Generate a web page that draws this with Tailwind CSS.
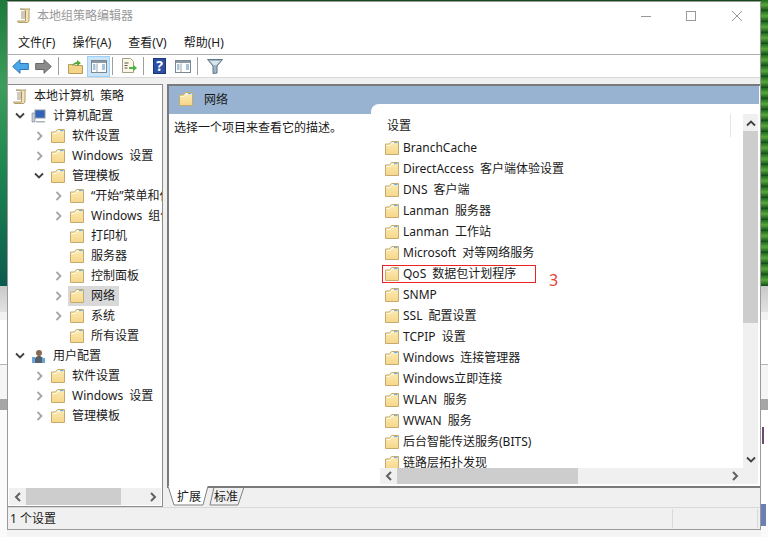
<!DOCTYPE html>
<html lang="zh-CN">

<head>
	<meta charset="UTF-8">
	<title>本地组策略编辑器</title>
	<script src="https://cdn.jsdelivr.net/npm/@tailwindcss/browser@4"></script>
</head>

<body class="m-0 bg-white">
	<svg class="absolute w-0 h-0">
		<defs>
			<linearGradient id="fg" x1="0" y1="0" x2="0" y2="1">
				<stop offset="0" stop-color="#fcecb4" />
				<stop offset="1" stop-color="#f6d68a" />
			</linearGradient>
		</defs>
		<symbol id="folder" viewBox="0 0 14 14">
			<path d="M.5 13.500V3h4l2-2.500h7v13z" fill="url(#fg)" stroke="#c6ab6e" />
			<path d="M1.500 4.500h3.500l2-2.500h5.500" fill="none" stroke="#fffbe9" />
			<rect x="9" y="1" width="3.500" height="1.200" fill="#6cb2e2" />
		</symbol>
		<symbol id="open" viewBox="0 0 8 10">
			<path d="M1.500 1l4 4-4 4" fill="none" stroke="#a6a6a6" stroke-width="1.800" />
		</symbol>
		<symbol id="down" viewBox="0 0 10 8">
			<path d="M1 1.500l4 4 4-4" fill="none" stroke="#404040" stroke-width="1.800" />
		</symbol>
		<symbol id="bl" viewBox="0 0 8 10">
			<path d="M6 1L2 5l4 4" fill="none" stroke="#606060" stroke-width="2" />
		</symbol>
		<symbol id="br" viewBox="0 0 8 10">
			<path d="M2 1l4 4-4 4" fill="none" stroke="#606060" stroke-width="2" />
		</symbol>
		<symbol id="scroll" viewBox="0 0 14 15">
			<path d="M3 1h10c-1 1-1 2-1 3v8c0 1.500-1 2.500-2 2.500H2c-1 0-1.500-.5-1.500-1.500h8V3C9 2 9 2 3 1z" fill="#f3e3b5" stroke="#a08850" stroke-width=".8" />
			<path d="M4 4h5M4 6h5M4 8h5M4 10h4" stroke="#8a7a55" stroke-width=".8" />
		</symbol>
		<symbol id="panel" viewBox="0 0 16 13">
			<rect x=".5" y=".5" width="15" height="12" fill="#fff" stroke="#7b8792" />
			<rect x="1" y="1" width="14" height="2" fill="#8c98a3" />
			<path d="M6 3.500v9" stroke="#9aa5ae" />
			<path d="M2 5h2.500M2 7h2.500M2 9h2.500M11 5h3M11 7h3M11 9h3" stroke="#4f87b5" />
		</symbol>
	</svg>

	<div class="w-[768px] h-[537px] flex overflow-hidden font-['Noto_Sans','Noto_Sans_CJK_SC',sans-serif] text-[12px] leading-5 text-[#1a1a1a] [word-spacing:3px]">
		<!-- desktop left of the window -->
		<div class="w-[7px] flex flex-col shrink-0">
			<div class="h-[286px] bg-[linear-gradient(180deg,#1d7a3a_0%,#3d9d5b_30%,#1d8550_60%,#0b5a4e_100%)]"></div>
			<div class="h-[26px] bg-[linear-gradient(180deg,#c9c9c9,#e2e2e2)]"></div>
			<div class="h-[8px] bg-[#f2f2f2]"></div>
			<div class="h-[45px] bg-white border-b border-[#b5b5b5]"></div>
			<div class="h-[34px] bg-[#f5f5f5]"></div>
			<div class="h-[11px] bg-[#a6a6a6]"></div>
			<div class="flex-1 bg-[#fafafa]"></div>
		</div>

		<!-- window -->
		<div class="w-[754px] shrink-0 flex flex-col">
			<div class="h-px shrink-0 bg-[#12491c]"></div>
			<div class="h-[529px] shrink-0 bg-white border border-[#9a9a9a] flex flex-col">
				<div class="h-[27px] flex items-center pl-[9px] shrink-0">
					<svg class="w-[14px] h-[15px]"><use href="#scroll" /></svg>
					<span class="ml-[6px] text-[#999999]">本地组策略编辑器</span>
					<div class="ml-auto flex items-center">
						<svg class="w-[10px] h-[10px]" viewBox="0 0 10 10"><path d="M0 5.500h10" stroke="#999" /></svg>
						<svg class="w-[10px] h-[10px] ml-[35px]" viewBox="0 0 10 10"><rect x=".5" y=".5" width="9" height="9" fill="none" stroke="#999" /></svg>
						<svg class="w-[10px] h-[10px] ml-[36px] mr-[18px]" viewBox="0 0 10 10"><path d="M0 0l10 10M10 0L0 10" stroke="#999" /></svg>
					</div>
				</div>
				<div class="h-[26px] pt-[3px] flex items-center pl-[10px] gap-[17px] border-b border-[#b0b0b0] shrink-0">
					<span>文件(F)</span><span>操作(A)</span><span>查看(V)</span><span>帮助(H)</span>
				</div>

				<div class="h-[22px] flex items-center pl-[4px] shrink-0">
					<svg class="w-[17px] h-[15px] shrink-0" viewBox="0 0 17 15"><path d="M.7 7.500L8 .7v3.800h8.300v6H8v3.800z" fill="#4aa8ea" stroke="#2a73b8" /></svg>
					<svg class="w-[17px] h-[15px] shrink-0 ml-[6px]" viewBox="0 0 17 15"><path d="M16.300 7.500L9 .7v3.800H.7v6H9v3.800z" fill="#8a8a8a" stroke="#666" /></svg>
					<div class="w-px h-[18px] bg-[#a0a0a0] ml-[6px]"></div>
					<svg class="w-[15px] h-[15px] ml-[9px]" viewBox="0 0 15 15"><path d="M.5 14.500v-9h5l1 1h8v8z" fill="#f4d488" stroke="#b99a5b" /><path d="M4 7c1-3 3-4 5-4V1l4 3-4 3V5C7 5 6 6 4 7z" fill="#55a63f" /></svg>
					<div class="w-[23px] h-[21px] ml-[4px] bg-[#cce4f7] border border-[#99d1ff] flex items-center justify-center">
						<svg class="w-[16px] h-[13px]"><use href="#panel" /></svg>
					</div>
					<div class="w-px h-[18px] bg-[#a0a0a0] ml-[2px]"></div>
					<svg class="w-[16px] h-[16px] ml-[8px]" viewBox="0 0 16 16"><path d="M1.500.5h8l3 3v11h-11z" fill="#fbf6e6" stroke="#a69d85" /><path d="M3.500 5h4M3.500 7.500h3M3.500 10h3" stroke="#555" /><path d="M8 9h4V6.500L16 10l-4 3.500V11H8z" fill="#55b04a" /></svg>
					<div class="w-px h-[18px] bg-[#a0a0a0] ml-[6px]"></div>
					<div class="w-[13px] h-[16px] ml-[9px] bg-[#2c4fa6] border border-[#1d3577] text-white font-bold text-[14px] leading-[14px] text-center">?</div>
					<svg class="w-[16px] h-[13px] ml-[9px]"><use href="#panel" /></svg>
					<div class="w-px h-[18px] bg-[#a0a0a0] ml-[6px]"></div>
					<svg class="w-[16px] h-[15px] ml-[9px]" viewBox="0 0 16 15"><path d="M.5.5h15L10 7v7l-4 0.500V7z" fill="#9fb6c6" stroke="#5d7688" /><path d="M3 2h10L9.500 6h-3z" fill="#dbe6ec" /></svg>
				</div>
				<div class="h-[7px] bg-[#f0f0f0] border-t border-[#d9d9d9] shrink-0"></div>

				<div class="flex-1 min-h-0 flex bg-[#f0f0f0]">
					<!-- tree -->
					<div class="w-[155px] shrink-0 flex flex-col bg-white border-t border-r border-b border-[#8c8c8c] overflow-hidden">
						<div class="flex-1 min-h-0 overflow-hidden whitespace-nowrap pt-px">
							<div class="h-5 flex items-center pl-[5px]"><svg class="w-[14px] h-[15px] shrink-0"><use href="#scroll" /></svg><span class="ml-[7px]">本地计算机 策略</span></div>
							<div class="h-5 flex items-center pl-[7px]">
								<svg class="w-[10px] h-[8px] shrink-0"><use href="#down" /></svg>
								<svg class="w-[15px] h-[14px] shrink-0 ml-[6px]" viewBox="0 0 15 14"><rect x="4" y="1" width="10" height="8" fill="#2f62b8" stroke="#8d99a8" /><path d="M1 4h3v9H1z" fill="#c5ccd4" stroke="#7b8794" stroke-width=".6" /><path d="M5 12h9v1.500H5z" fill="#aab3bd" /></svg>
								<span class="ml-[7px]">计算机配置</span>
							</div>
							<div class="h-5 flex items-center pl-[28px]"><svg class="w-[8px] h-[10px] shrink-0"><use href="#open" /></svg><svg class="w-[14px] h-[14px] shrink-0 ml-[7px]"><use href="#folder" /></svg><span class="ml-[7px]">软件设置</span></div>
							<div class="h-5 flex items-center pl-[28px]"><svg class="w-[8px] h-[10px] shrink-0"><use href="#open" /></svg><svg class="w-[14px] h-[14px] shrink-0 ml-[7px]"><use href="#folder" /></svg><span class="ml-[7px]">Windows 设置</span></div>
							<div class="h-5 flex items-center pl-[26px]"><svg class="w-[10px] h-[8px] shrink-0"><use href="#down" /></svg><svg class="w-[14px] h-[14px] shrink-0 ml-[7px]"><use href="#folder" /></svg><span class="ml-[7px]">管理模板</span></div>
							<div class="h-5 flex items-center pl-[47px]"><svg class="w-[8px] h-[10px] shrink-0"><use href="#open" /></svg><svg class="w-[14px] h-[14px] shrink-0 ml-[7px]"><use href="#folder" /></svg><span class="ml-[7px]">“开始”菜单和任务栏</span></div>
							<div class="h-5 flex items-center pl-[47px]"><svg class="w-[8px] h-[10px] shrink-0"><use href="#open" /></svg><svg class="w-[14px] h-[14px] shrink-0 ml-[7px]"><use href="#folder" /></svg><span class="ml-[7px]">Windows 组件</span></div>
							<div class="h-5 flex items-center pl-[62px]"><svg class="w-[14px] h-[14px] shrink-0"><use href="#folder" /></svg><span class="ml-[7px]">打印机</span></div>
							<div class="h-5 flex items-center pl-[62px]"><svg class="w-[14px] h-[14px] shrink-0"><use href="#folder" /></svg><span class="ml-[7px]">服务器</span></div>
							<div class="h-5 flex items-center pl-[47px]"><svg class="w-[8px] h-[10px] shrink-0"><use href="#open" /></svg><svg class="w-[14px] h-[14px] shrink-0 ml-[7px]"><use href="#folder" /></svg><span class="ml-[7px]">控制面板</span></div>
							<div class="h-5 flex items-center pl-[47px]"><svg class="w-[8px] h-[10px] shrink-0"><use href="#open" /></svg><div class="w-[51px] h-5 ml-[5px] pl-[2px] bg-[#d9d9d9] flex items-center"><svg class="w-[14px] h-[14px] shrink-0"><use href="#folder" /></svg><span class="ml-[7px]">网络</span></div></div>
							<div class="h-5 flex items-center pl-[47px]"><svg class="w-[8px] h-[10px] shrink-0"><use href="#open" /></svg><svg class="w-[14px] h-[14px] shrink-0 ml-[7px]"><use href="#folder" /></svg><span class="ml-[7px]">系统</span></div>
							<div class="h-5 flex items-center pl-[62px]"><svg class="w-[14px] h-[14px] shrink-0"><use href="#folder" /></svg><span class="ml-[7px]">所有设置</span></div>
							<div class="h-5 flex items-center pl-[7px]">
								<svg class="w-[10px] h-[8px] shrink-0"><use href="#down" /></svg>
								<svg class="w-[15px] h-[15px] shrink-0 ml-[6px]" viewBox="0 0 15 15"><circle cx="8" cy="4" r="3" fill="#8a6a4f" /><path d="M3 14c0-5 2-7 5-7s5 2 5 7z" fill="#56606c" /><path d="M1 8h3v6H1zM11 9h3v5h-3z" fill="#6aa5d8" /></svg>
								<span class="ml-[7px]">用户配置</span>
							</div>
							<div class="h-5 flex items-center pl-[28px]"><svg class="w-[8px] h-[10px] shrink-0"><use href="#open" /></svg><svg class="w-[14px] h-[14px] shrink-0 ml-[7px]"><use href="#folder" /></svg><span class="ml-[7px]">软件设置</span></div>
							<div class="h-5 flex items-center pl-[28px]"><svg class="w-[8px] h-[10px] shrink-0"><use href="#open" /></svg><svg class="w-[14px] h-[14px] shrink-0 ml-[7px]"><use href="#folder" /></svg><span class="ml-[7px]">Windows 设置</span></div>
							<div class="h-5 flex items-center pl-[28px]"><svg class="w-[8px] h-[10px] shrink-0"><use href="#open" /></svg><svg class="w-[14px] h-[14px] shrink-0 ml-[7px]"><use href="#folder" /></svg><span class="ml-[7px]">管理模板</span></div>
						</div>
						<div class="h-[17px] mx-px mb-px flex bg-[#f0f0f0] shrink-0">
							<div class="w-[17px] flex items-center justify-center"><svg class="w-[8px] h-[10px]"><use href="#bl" /></svg></div>
							<div class="w-[95px] bg-[#cdcdcd]"></div>
							<div class="ml-auto w-[17px] flex items-center justify-center"><svg class="w-[8px] h-[10px]"><use href="#br" /></svg></div>
						</div>
					</div>

					<!-- details -->
					<div class="w-[4px] shrink-0"></div>
					<div class="flex-1 min-w-0 flex flex-col">
						<div class="flex-1 min-h-0 border-t-2 border-l-2 border-[#7a7a7a] bg-white pr-px flex flex-col">
							<div class="h-[28px] bg-[#98b3d1] shrink-0 flex items-start pl-[10px] pt-[5px]">
								<svg class="w-[14px] h-[14px] mt-[1px]"><use href="#folder" /></svg>
								<span class="ml-[11px] leading-[18px]">网络</span>
							</div>
							<div class="flex-1 min-h-0 flex">
								<div class="w-[202px] shrink-0 pl-[5px] pt-[4px]">选择一个项目来查看它的描述。</div>
								<div class="flex-1 min-w-0 flex flex-col -mt-[10px] pt-[10px] bg-white rounded-tl-[8px] pl-[9px] pr-[1px] pb-[3px] whitespace-nowrap">
									<div class="flex-1 min-h-0 flex">
										<div class="flex-1 min-w-0 flex flex-col">
											<div class="h-[23px] shrink-0 flex items-center pl-[7px] relative">
												<span>设置</span>
												<div class="absolute right-[12px] top-0 bottom-0 w-px bg-[#e5e5e5]"></div>
											</div>
											<div class="flex-1 min-h-0 overflow-hidden">
												<div class="h-[21px] flex items-center pl-[5px]"><svg class="w-[14px] h-[14px]"><use href="#folder" /></svg><span class="ml-[4px]">BranchCache</span></div>
												<div class="h-[21px] flex items-center pl-[5px]"><svg class="w-[14px] h-[14px]"><use href="#folder" /></svg><span class="ml-[4px]">DirectAccess 客户端体验设置</span></div>
												<div class="h-[21px] flex items-center pl-[5px]"><svg class="w-[14px] h-[14px]"><use href="#folder" /></svg><span class="ml-[4px]">DNS 客户端</span></div>
												<div class="h-[21px] flex items-center pl-[5px]"><svg class="w-[14px] h-[14px]"><use href="#folder" /></svg><span class="ml-[4px]">Lanman 服务器</span></div>
												<div class="h-[21px] flex items-center pl-[5px]"><svg class="w-[14px] h-[14px]"><use href="#folder" /></svg><span class="ml-[4px]">Lanman 工作站</span></div>
												<div class="h-[21px] flex items-center pl-[5px]"><svg class="w-[14px] h-[14px]"><use href="#folder" /></svg><span class="ml-[4px]">Microsoft 对等网络服务</span></div>
												<div class="h-[21px] flex items-center pl-[5px] relative">
													<svg class="w-[14px] h-[14px]"><use href="#folder" /></svg><span class="ml-[4px]">QoS 数据包计划程序</span>
													<div class="absolute left-[2px] top-[2px] w-[154px] h-[18px] border border-[#ee2222]"></div>
													<span class="absolute left-[169px] top-[7px] text-[16px] leading-5 text-[#e8403a]">3</span>
												</div>
												<div class="h-[21px] flex items-center pl-[5px]"><svg class="w-[14px] h-[14px]"><use href="#folder" /></svg><span class="ml-[4px]">SNMP</span></div>
												<div class="h-[21px] flex items-center pl-[5px]"><svg class="w-[14px] h-[14px]"><use href="#folder" /></svg><span class="ml-[4px]">SSL 配置设置</span></div>
												<div class="h-[21px] flex items-center pl-[5px]"><svg class="w-[14px] h-[14px]"><use href="#folder" /></svg><span class="ml-[4px]">TCPIP 设置</span></div>
												<div class="h-[21px] flex items-center pl-[5px]"><svg class="w-[14px] h-[14px]"><use href="#folder" /></svg><span class="ml-[4px]">Windows 连接管理器</span></div>
												<div class="h-[21px] flex items-center pl-[5px]"><svg class="w-[14px] h-[14px]"><use href="#folder" /></svg><span class="ml-[4px]">Windows立即连接</span></div>
												<div class="h-[21px] flex items-center pl-[5px]"><svg class="w-[14px] h-[14px]"><use href="#folder" /></svg><span class="ml-[4px]">WLAN 服务</span></div>
												<div class="h-[21px] flex items-center pl-[5px]"><svg class="w-[14px] h-[14px]"><use href="#folder" /></svg><span class="ml-[4px]">WWAN 服务</span></div>
												<div class="h-[21px] flex items-center pl-[5px]"><svg class="w-[14px] h-[14px]"><use href="#folder" /></svg><span class="ml-[4px]">后台智能传送服务(BITS)</span></div>
												<div class="h-[21px] flex items-center pl-[5px]"><svg class="w-[14px] h-[14px]"><use href="#folder" /></svg><span class="ml-[4px]">链路层拓扑发现</span></div>
											</div>
										</div>
										<div class="w-[15px] shrink-0 bg-[#f0f0f0] flex flex-col">
											<div class="h-[17px] flex items-center justify-center"><svg class="w-[10px] h-[8px] rotate-180"><use href="#down" /></svg></div>
											<div class="h-[192px] bg-[#cdcdcd]"></div>
											<div class="mt-auto h-[17px] flex items-center justify-center"><svg class="w-[10px] h-[8px]"><use href="#down" /></svg></div>
										</div>
									</div>
									<div class="h-[16px] shrink-0 flex bg-[#f0f0f0]">
										<div class="w-[17px] flex items-center justify-center"><svg class="w-[8px] h-[10px]"><use href="#bl" /></svg></div>
										<div class="w-[181px] bg-[#cdcdcd]"></div>
										<div class="ml-auto w-[17px] mr-[15px] flex items-center justify-center"><svg class="w-[8px] h-[10px]"><use href="#br" /></svg></div>
									</div>
								</div>
							</div>
						</div>
						<!-- tabs -->
						<div class="h-[21px] shrink-0 border-t-2 border-[#7a7a7a] flex bg-[#f0f0f0] -mt-px">
							<svg class="w-[42px] h-[20px] -mt-[2px] relative shrink-0" viewBox="0 0 42 20"><path d="M1 0l6 19h29l5-19z" fill="#fff" stroke="#808080" /><path d="M1.500 0h39" stroke="#fff" stroke-width="2" /></svg>
							<span class="-ml-[32px] w-[32px] relative leading-[18px]">扩展</span>
							<svg class="w-[36px] h-[20px] -mt-[2px] relative shrink-0" viewBox="0 0 36 20"><path d="M1 19h28l6-18" fill="none" stroke="#808080" /><path d="M1 19L5 1" stroke="#808080" /></svg>
							<span class="-ml-[31px] relative leading-[18px]">标准</span>
						</div>
					</div>
				</div>

				<div class="h-[22px] shrink-0 bg-[#f0f0f0] border-t border-[#d9d9d9] flex items-center pl-[2px]">
					<span class="flex-1 leading-5 [word-spacing:0]">1 个设置</span>
					<div class="w-[86px] h-[19px] border-l border-r border-[#d9d9d9] mr-[2px]"></div>
				</div>
			</div>
			<div class="flex-1 bg-[#f4f4f4]"></div>
		</div>

		<!-- desktop right of the window -->
		<div class="flex-1 flex flex-col">
			<div class="h-[286px] bg-[repeating-linear-gradient(180deg,#1f6b1e_0px,#57a83a_5px,#0f4a18_11px)]"></div>
			<div class="h-[26px] bg-[linear-gradient(180deg,#c9c9c9,#e2e2e2)]"></div>
			<div class="h-[8px] bg-[#f2f2f2]"></div>
			<div class="h-[45px] bg-white border-b border-[#b5b5b5]"></div>
			<div class="h-[34px] bg-[#f5f5f5]"></div>
			<div class="h-[11px] bg-[#a6a6a6]"></div>
			<div class="h-[17px] bg-white"></div>
			<div class="h-[17px] w-[2px] ml-px bg-[#6a4a70]"></div>
			<div class="h-[60px] bg-white"></div>
			<div class="h-[22px] w-[5px] bg-[#6a7fb5]"></div>
			<div class="flex-1 bg-[#fafafa]"></div>
		</div>
	</div>
</body>

</html>
